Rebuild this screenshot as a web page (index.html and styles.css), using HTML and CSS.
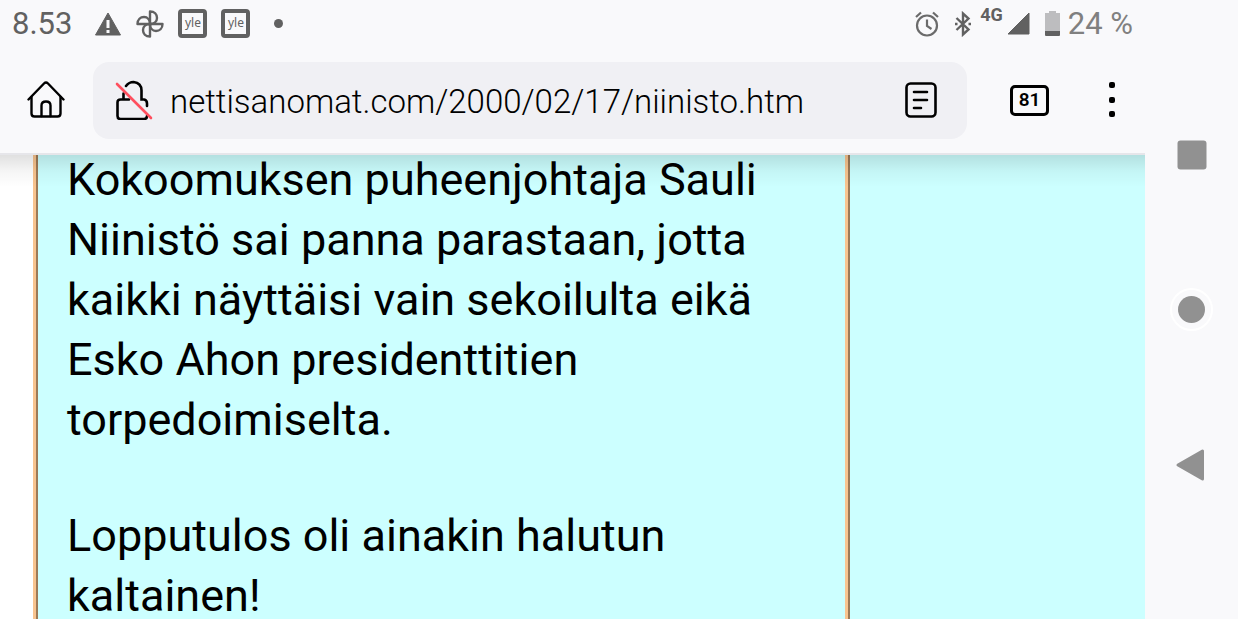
FILE: index.html
```html
<!DOCTYPE html>
<html lang="fi">
<head>
    <meta charset="UTF-8">
    <meta name="viewport" content="width=device-width, initial-scale=1.0">
    <title>nettisanomat.com</title>
    <link rel="stylesheet" href="styles.css">
</head>
<body>
    <div class="screen">
        <header class="status-bar">
            <div class="status-left">
                <span class="clock">8.53</span>
                <svg class="warning" width="28" height="24" viewBox="0 0 28 24">
                    <path d="M14 1 L26.500 23 H1.500 Z" fill="#616161" stroke="#616161" stroke-linejoin="round"/>
                    <path d="M12.500 8h3v8h-3zM12.500 18h3v3h-3z" fill="#f9f9fb"/>
                </svg>
                <svg class="fan" width="28" height="28" viewBox="0 0 28 28" fill="none" stroke="#616161" stroke-width="2.400" stroke-linejoin="round">
                    <path id="blade" d="M14 14 V1.500 C18.500 1.500 21 4.500 21 8 C21 11.500 18 14 14 14 Z"/>
                    <use href="#blade" transform="rotate(90 14 14)"/>
                    <use href="#blade" transform="rotate(180 14 14)"/>
                    <use href="#blade" transform="rotate(270 14 14)"/>
                </svg>
                <span class="yle">yle</span>
                <span class="yle">yle</span>
                <span class="more-dot"></span>
            </div>
            <div class="status-right">
                <svg class="alarm" width="24" height="26" viewBox="0 0 24 26" fill="none" stroke="#6b6b6b" stroke-width="2.200">
                    <circle cx="12" cy="14.500" r="10"/>
                    <path d="M12 8.500V15l4.500 3M1 6l5-4.500M23 6l-5-4.500"/>
                </svg>
                <svg class="bluetooth" width="16" height="26" viewBox="0 0 16 26" fill="none" stroke="#616161" stroke-width="2.400">
                    <path d="M1.500 7 L13.500 18.500 L8 23.500 V2.500 L13.500 7.500 L1.500 19"/>
                    <path d="M0 13h2.500M13.500 13H16"/>
                </svg>
                <span class="network">4G</span>
                <svg class="signal" width="23" height="23" viewBox="0 0 23 23">
                    <path d="M22 1V22H1Z" fill="#616161" stroke="#616161" stroke-linejoin="round"/>
                </svg>
                <svg class="battery" width="15" height="25" viewBox="0 0 15 25">
                    <path d="M4 0h7v2h4v18H0V2h4z" fill="#bdbdbf"/>
                    <path d="M0 20h15v4q0 1-1 1H1q-1 0-1-1z" fill="#616161"/>
                </svg>
                <span class="percent">24 %</span>
            </div>
        </header>

        <nav class="toolbar">
            <button class="icon-btn home-btn" aria-label="Etusivu">
                <svg width="38" height="38" viewBox="0 0 38 38" fill="none" stroke="#000" stroke-width="2.400" stroke-linecap="round" stroke-linejoin="round">
                    <path d="M1.500 18.500 L17 2.500 Q19 .5 21 2.500 L36.500 18.500"/>
                    <path d="M4.500 16V32.500Q4.500 35.500 7.500 35.500H30.500Q33.500 35.500 33.500 32.500V16"/>
                    <path d="M14.500 35V24.500Q14.500 20.500 19 20.500Q23.500 20.500 23.500 24.500V35"/>
                </svg>
            </button>
            <div class="address-bar">
                <svg class="lock" width="38" height="40" viewBox="0 0 38 40" fill="none" stroke-linecap="round">
                    <path d="M11 6 Q14 2 18.500 2 Q26.500 3 26.500 10.500V19.500H29Q32 20 32 23.500V26M8.500 13.500V19.500M14 19.500H5.500Q2.500 19.500 2.500 22.500V36Q2.500 39 5.500 39H29Q32 39 32 36" stroke="#000" stroke-width="2.600"/>
                    <path d="M2 4 L36 38" stroke="#ff4f5e" stroke-width="2.600"/>
                </svg>
                <input class="url" type="text" aria-label="Osoite" value="nettisanomat.com/2000/02/17/niinisto.htm">
                <button class="icon-btn" aria-label="Lukunäkymä">
                    <svg width="32" height="36" viewBox="0 0 32 36" fill="none" stroke="#000" stroke-width="2.600" stroke-linecap="round">
                        <rect x="1.500" y="1.500" width="29" height="33" rx="4"/>
                        <path d="M9 10h13M9 18h13M9 26h7"/>
                    </svg>
                </button>
            </div>
            <button class="tabs-btn">81</button>
            <button class="icon-btn menu-btn" aria-label="Valikko">
                <svg width="6" height="36" viewBox="0 0 6 36">
                    <rect width="6" height="6" rx="2"/>
                    <rect y="15" width="6" height="6" rx="2"/>
                    <rect y="29" width="6" height="6" rx="2"/>
                </svg>
            </button>
        </nav>

        <main class="page">
            <article class="story">
                <p>Kokoomuksen puheenjohtaja Sauli Niinistö sai panna parastaan, jotta kaikki näyttäisi vain sekoilulta eikä Esko Ahon presidenttitien torpedoimiselta.</p>
                <p>Lopputulos oli ainakin halutun kaltainen!</p>
            </article>
            <div class="side"></div>
        </main>
    </div>

    <aside class="system-nav">
        <button class="icon-btn" aria-label="Viimeisimmät">
            <svg width="40" height="40" viewBox="0 0 40 40"><rect x="5.500" y="5.500" width="29" height="29" rx="3" fill="#919191"/></svg>
        </button>
        <button class="icon-btn" aria-label="Koti">
            <svg width="44" height="44" viewBox="0 0 44 44">
                <circle cx="21.500" cy="21.500" r="20.500" fill="none" stroke="#fff" stroke-width="2"/>
                <circle cx="21.500" cy="21.500" r="13.500" fill="#919191"/>
            </svg>
        </button>
        <button class="icon-btn" aria-label="Takaisin">
            <svg width="40" height="40" viewBox="0 0 40 40"><path d="M6 20 L30.500 6 V34 Z" fill="#919191" stroke="#919191" stroke-width="3" stroke-linejoin="round"/></svg>
        </button>
    </aside>
</body>
</html>
```

FILE: styles.css
```css
:root {
    --chrome: #f9f9fb;
    --field: #f0f0f4;
    --grey: #616161;
    --cyan: #ccffff;
    --tan: #f8c48f;
    --brown: #9c7a58;
}

* {
    box-sizing: border-box;
}

body {
    margin: 0;
    height: 100vh;
    display: flex;
    overflow: hidden;
    background: var(--chrome);
    color: #000;
    font-family: Roboto, sans-serif;
}

button,
input {
    border: 0;
    padding: 0;
    background: none;
    color: inherit;
    font-family: inherit;
}

svg {
    display: block;
    flex: none;
}

.screen {
    flex: 1;
    min-width: 0;
    display: flex;
    flex-direction: column;
}

/* status bar */
.status-bar {
    display: flex;
    justify-content: space-between;
    height: 47px;
    padding: 0 12px;
    flex: none;
    color: var(--grey);
}

.status-left,
.status-right {
    display: flex;
    align-items: center;
}

.status-left {
    gap: 14px;
}

.clock,
.percent {
    font-size: 31px;
    line-height: 48px;
}

.clock {
    margin-right: 8px;
}

.percent {
    color: #808080;
    margin-left: 8px;
}

.yle {
    width: 29px;
    height: 29px;
    border: 4px solid var(--grey);
    border-radius: 4px;
    font: 12px/20px "Noto Sans", sans-serif;
    text-align: center;
}

.more-dot {
    width: 9px;
    height: 9px;
    margin-left: 10px;
    border-radius: 50%;
    background: var(--grey);
}

.network {
    align-self: flex-start;
    margin: 4px 4px 0 9px;
    font-size: 18px;
    font-weight: 700;
    line-height: 22px;
}

.bluetooth {
    margin-left: 16px;
}

.battery {
    margin-left: 15px;
}

/* browser toolbar */
.toolbar {
    display: flex;
    align-items: center;
    height: 108px;
    padding: 0 30px 0 27px;
    flex: none;
    border-bottom: 2px solid #e6e6ea;
}

.home-btn {
    margin-right: 28px;
}

.address-bar {
    flex: 1;
    min-width: 0;
    display: flex;
    align-items: center;
    height: 77px;
    padding: 0 30px 0 22px;
    border-radius: 16px;
    background: var(--field);
}

.url {
    flex: 1;
    min-width: 0;
    height: 48px;
    margin-left: 17px;
    padding-top: 3px;
    font-size: 33px;
    font-weight: 350;
}

.tabs-btn {
    width: 39px;
    height: 31px;
    margin: 0 60px 0 43px;
    border: 3px solid #000;
    border-radius: 5px;
    font-size: 19px;
    font-weight: 600;
    line-height: 24px;
}

/* web page */
.page {
    position: relative;
    flex: 1;
    min-height: 0;
    display: flex;
    padding-left: 33px;
    background: #fff;
}

.page::after {
    content: "";
    position: absolute;
    inset: 0 0 auto;
    height: 32px;
    background: linear-gradient(rgba(0, 0, 0, 0.12), rgba(0, 0, 0, 0.04) 50%, transparent);
}

.story {
    width: 73%;
    padding: 0 28px;
    border-left: 3px solid var(--tan);
    background: var(--cyan);
    box-shadow: inset 2px 0 var(--brown);
    font-size: 45px;
    line-height: 60px;
}

.story p {
    margin: -5px 0 61px;
    padding-left: 3px;
}

.side {
    flex: 1;
    border-left: 3px solid var(--tan);
    background: var(--cyan);
    box-shadow: inset 2px 0 var(--brown);
}

/* android buttons */
.system-nav {
    width: 93px;
    flex: none;
    display: flex;
    flex-direction: column;
    align-items: center;
    justify-content: center;
    gap: 113px;
}
```
